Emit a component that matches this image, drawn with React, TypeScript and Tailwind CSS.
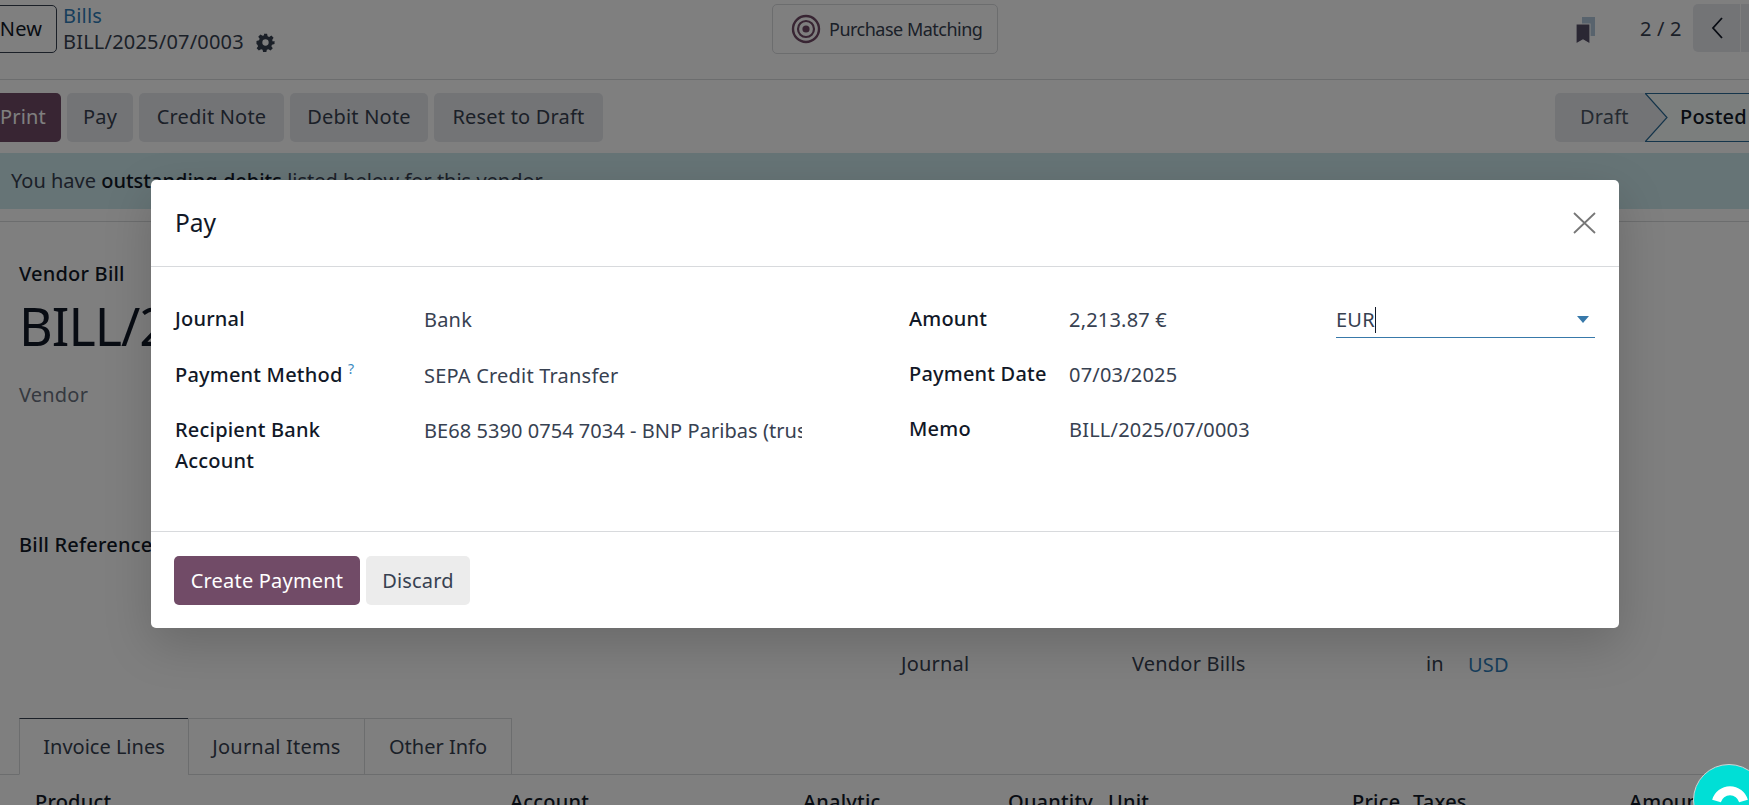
const font = { fontFamily: '"Noto Sans", sans-serif' };

function Btn({ children, w, cls = "" }: { children: React.ReactNode; w: string; cls?: string }) {
  return (
    <div className={`flex items-center justify-center h-[49px] rounded-[5px] ${w} ${cls}`}>{children}</div>
  );
}

function Field({ label, value, labelW, valueW }: { label: React.ReactNode; value: React.ReactNode; labelW: string; valueW: string }) {
  return (
    <div className="flex">
      <div className={`${labelW} shrink-0 font-medium text-[#111827] leading-[31px]`}>{label}</div>
      <div className={`${valueW} shrink-0 overflow-hidden whitespace-nowrap text-[#374151] leading-[31px] pt-px`}>{value}</div>
    </div>
  );
}

function Gear() {
  return (
    <svg width="19" height="19" viewBox="0 0 24 24" fill="#374151">
      <path fillRule="evenodd" d="M10 1h4l.7 3.200 1.900.8 2.800-1.800 2.800 2.800-1.800 2.800.8 1.900L23.400 10v4l-3.200.7-.8 1.900 1.800 2.800-2.800 2.800-2.800-1.800-1.900.8-.7 3.200h-4l-.7-3.200-1.900-.8-2.800 1.800-2.800-2.800 1.800-2.800-.8-1.900L.6 14v-4l3.200-.7.8-1.900L2.800 4.600l2.800-2.800 2.800 1.800 1.900-.8zM12 8a4 4 0 1 0 0 8 4 4 0 0 0 0-8z" />
    </svg>
  );
}

export default function App() {
  return (
    <div className="relative h-[805px] w-[1749px] overflow-hidden bg-white text-[20px] text-[#374151] tracking-[0.2px]" style={font}>
      {/* top bar */}
      <div className="flex items-start h-[80px] border-b border-[#d8dadd] pt-[4px]">
        <div className="-ml-[15px] mt-[1px] w-[72px] h-[48px] shrink-0 flex items-center justify-center rounded-[5px] border border-[#374151] text-[#111827]">New</div>
        <div className="ml-[6px] w-[709px] shrink-0">
          <div className="text-[#2f7db8] leading-[24px]">Bills</div>
          <div className="flex items-center gap-[12px] leading-[28px]">
            <span>BILL/2025/07/0003</span>
            <Gear />
          </div>
        </div>
        <div className="w-[226px] h-[50px] shrink-0 flex items-center pl-[18px] gap-[8px] rounded-[5px] border border-[#d8dadd] text-[18px] tracking-[-0.5px]">
          <svg width="30" height="30" viewBox="0 0 30 30" fill="none" stroke="#714b67">
            <circle cx="15" cy="15" r="13" strokeWidth="2.400" />
            <circle cx="15" cy="15" r="8" strokeWidth="2.200" />
            <circle cx="15" cy="15" r="3.600" fill="#714b67" stroke="none" />
          </svg>
          <span>Purchase Matching</span>
        </div>
        <div className="ml-[578px] mt-[13px] w-[30px] shrink-0">
          <svg width="20" height="28" viewBox="0 0 20 28">
            <path d="M6 0h13v19H6z" fill="#b0c6da" />
            <path d="M0 7h14v20l-7-4-7 4z" fill="#544e66" stroke="#ffffff" strokeWidth="1.200" />
          </svg>
        </div>
        <div className="ml-[34px] w-[53px] shrink-0 mt-[10px] leading-[30px] whitespace-nowrap">2 / 2</div>
        <div className="w-[47px] h-[48px] shrink-0 flex items-center justify-center bg-[#e7e9ed] rounded-l-[5px]">
          <svg width="14" height="22" viewBox="0 0 14 22" fill="none" stroke="#111827" strokeWidth="1.800"><path d="M12 1 3 11l9 10" /></svg>
        </div>
        <div className="ml-[1px] w-[40px] h-[48px] shrink-0 bg-[#e7e9ed]" />
      </div>

      {/* action row */}
      <div className="flex items-center h-[73px] pt-[1px]">
        <div className="-ml-[15px] flex gap-[6px]">
          <Btn w="w-[76px]" cls="bg-[#714b67] text-white">Print</Btn>
          <Btn w="w-[66px]" cls="bg-[#e7e9ed]">Pay</Btn>
          <Btn w="w-[145px]" cls="bg-[#e7e9ed]">Credit Note</Btn>
          <Btn w="w-[138px]" cls="bg-[#e7e9ed]">Debit Note</Btn>
          <Btn w="w-[169px]" cls="bg-[#e7e9ed]">Reset to Draft</Btn>
        </div>
        <div className="ml-auto flex h-[49px]">
          <div className="w-[90px] flex items-center pl-[25px] bg-[#e7e9ed] rounded-l-[5px] text-[#4b5563]">Draft</div>
          <div className="relative w-[104px] flex items-center pl-[35px] text-[#111827] font-medium border-y border-[#2b6a96] bg-[#f6fdfb]">
            <svg className="absolute left-0 -top-px" width="23" height="49" viewBox="0 0 23 49" fill="none">
              <path d="M0 0l22 24.500L0 49z" fill="#e7e9ed" />
              <path d="M0 0l22 24.500L0 49" stroke="#2b6a96" strokeWidth="1.200" />
            </svg>
            <span className="relative">Posted</span>
          </div>
        </div>
      </div>

      {/* alert */}
      <div className="h-[56px] bg-[#cde8ed] pl-[11px] pt-[13px] leading-[30px] tracking-normal">
        You have <span className="font-medium text-[#111827]">outstanding debits</span> listed below for this vendor.
      </div>

      {/* sheet */}
      <div className="mt-[12px] border-t border-[#d8dadd] pl-[19px] h-[584px] overflow-hidden">
        <div className="mt-[38px] font-medium text-[#111827] leading-[28px]">Vendor Bill</div>
        <div className="text-[52px] text-[#111827] leading-[66px] mt-[5px] tracking-[-1px] whitespace-nowrap">BILL/2025/07/0003</div>
        <div className="mt-[22px] text-[#6b7280] leading-[28px]">Vendor</div>
        <div className="mt-[122px] font-medium text-[#111827] leading-[28px] whitespace-nowrap">Bill Reference</div>
        <div className="flex mt-[90px] pl-[882px] leading-[30px]">
          <span className="w-[231px]">Journal</span>
          <span className="w-[294px]">Vendor Bills</span>
          <span className="w-[42px]">in</span>
          <span className="text-[#2f7db8] pt-px">USD</span>
        </div>
        <div className="flex mt-[38px] h-[57px]">
          <div className="w-[170px] flex items-center justify-center border border-[#d8dadd] border-t-[#374151] border-b-white tracking-normal">Invoice Lines</div>
          <div className="w-[177px] -ml-px flex items-center justify-center border border-[#d8dadd]">Journal Items</div>
          <div className="w-[148px] -ml-px flex items-center justify-center border border-[#d8dadd] tracking-normal">Other Info</div>
        </div>
        <div className="-ml-[19px] border-t border-[#d8dadd] -mt-px flex h-[40px] pt-[13px] font-medium text-[#111827] leading-[28px] whitespace-nowrap">
          <span className="ml-[35px] w-[475px]">Product</span>
          <span className="w-[293px]">Account</span>
          <span className="w-[205px]">Analytic</span>
          <span className="w-[100px]">Quantity</span>
          <span className="w-[244px]">Unit</span>
          <span className="w-[61px]">Price</span>
          <span className="w-[216px]">Taxes</span>
          <span>Amount</span>
        </div>
      </div>

      {/* backdrop */}
      <div className="absolute inset-0 bg-black/50" />

      {/* help bubble */}
      <div className="absolute left-[1693px] top-[764px] w-[72px] h-[72px] rounded-full bg-[#00dfd6] border border-[#cfd4d4]">
        <svg className="absolute left-0 top-0" width="72" height="72" viewBox="0 0 72 72" fill="none">
          <path d="M22.500 36a14 14 0 0 1 27 0" stroke="#fff" strokeWidth="9" />
        </svg>
      </div>

      {/* modal */}
      <div className="absolute left-[151px] top-[180px] w-[1468px] h-[448px] bg-white rounded-[5px] shadow-[0_16px_48px_rgba(0,0,0,0.175)] flex flex-col">
        <div className="h-[87px] shrink-0 flex items-center justify-between pl-[24px] pr-[23px] pb-[1px] border-b border-[#d8dadd]">
          <div className="text-[24.500px] text-[#111827] leading-[32px] tracking-normal">Pay</div>
          <svg width="23" height="22" viewBox="0 0 23 22" fill="none" stroke="#777777" strokeWidth="1.800"><path d="M1 1l21 20M22 1 1 21" /></svg>
        </div>
        <div className="h-[265px] shrink-0 border-b border-[#d8dadd] pt-[36px] pl-[24px] grid grid-cols-[734px_1fr] content-start">
          <div className="flex flex-col gap-[23.500px]">
            <Field labelW="w-[249px]" valueW="w-[378px]" label="Journal" value="Bank" />
            <Field
              labelW="w-[249px]"
              valueW="w-[378px]"
              label={<span>Payment Method <sup className="text-[#3b8ac0] font-normal text-[14px] -top-[8px]">?</sup></span>}
              value="SEPA Credit Transfer"
            />
            <Field labelW="w-[249px]" valueW="w-[378px]" label={<span>Recipient Bank<br />Account</span>} value={<span className="tracking-[0.05px]">BE68 5390 0754 7034 - BNP Paribas (trust account)</span>} />
          </div>
          <div className="flex flex-col gap-[23.500px]">
            <div className="flex h-[31px]">
              <Field labelW="w-[160px]" valueW="w-[267px]" label="Amount" value="2,213.87 €" />
              <div className="w-[259px] h-[34.500px] shrink-0 flex items-center justify-between border-b-[1.500px] border-[#3879aa] pr-[6px]">
                <span className="text-[#374151] border-r border-[#111827] leading-[26px]">EUR</span>
                <span className="w-0 h-0 border-x-[6px] border-x-transparent border-t-[7px] border-t-[#3879aa]" />
              </div>
            </div>
            <Field labelW="w-[160px]" valueW="w-[267px]" label="Payment Date" value="07/03/2025" />
            <Field labelW="w-[160px]" valueW="w-[267px]" label="Memo" value="BILL/2025/07/0003" />
          </div>
        </div>
        <div className="flex gap-[6px] pl-[23px] pt-[24px]">
          <Btn w="w-[186px]" cls="bg-[#714b67] text-white">Create Payment</Btn>
          <Btn w="w-[104px]" cls="bg-[#ececec] text-[#374151]">Discard</Btn>
        </div>
      </div>
    </div>
  );
}
